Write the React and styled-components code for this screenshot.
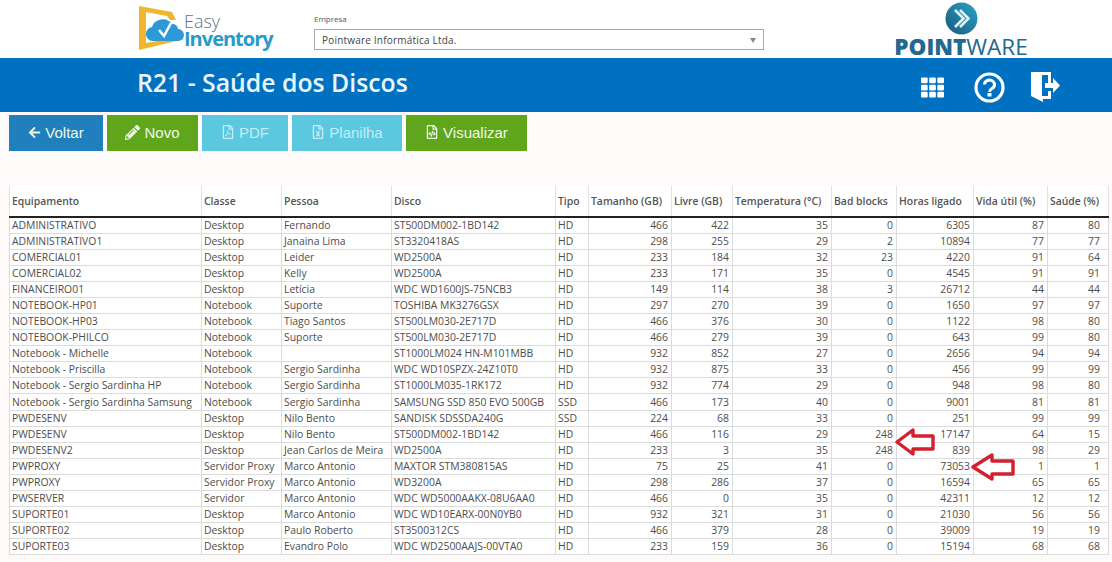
import React from "react";
import styled, { createGlobalStyle } from "styled-components";
import { FaArrowLeft, FaPencilAlt, FaRegFilePdf, FaRegFileExcel, FaRegFileCode, FaTh } from "react-icons/fa";

const GlobalStyle = createGlobalStyle`
  html, body {
    margin: 0;
    padding: 0;
    background: #fffafa;
    font-family: "Open Sans", "Noto Sans", sans-serif;
    overflow: hidden;
  }
`;

const Page = styled.div`
  position: relative;
  width: 1112px;
  height: 562px;
  overflow: hidden;
`;

const TopBar = styled.header`
  height: 58px;
  background: #fff;
  display: flex;
  padding-left: 137px;
`;

const BrandLogo = styled.div`
  width: 138px;
  height: 52px;
  display: flex;
  align-items: flex-start;
  margin-top: 3px;
`;

const BrandText = styled.div`
  display: flex;
  flex-direction: column;
  margin-left: -1px;
  margin-top: 11px;
  font-family: "Open Sans", sans-serif;
`;

const BrandEasy = styled.span`
  font-size: 18px;
  line-height: 15px;
  font-weight: 300;
  color: #66727c;
`;

const BrandName = styled.span`
  font-size: 20px;
  line-height: 19px;
  font-weight: 700;
  color: #2b9ac9;
  letter-spacing: -1px;
`;

const CompanyField = styled.div`
  width: 450px;
  margin-left: 39px;
  padding-top: 13px;
`;

const CompanyLabel = styled.div`
  font-size: 8px;
  line-height: 11px;
  color: #555;
  margin-bottom: 5px;
`;

const CompanySelect = styled.div`
  height: 19px;
  border: 1px solid #a9a9a9;
  display: flex;
  align-items: center;
  justify-content: space-between;
  padding: 0 7px;
  font-size: 10px;
  color: #444;
  letter-spacing: 0.2px;
`;

const Caret = styled.span`
  width: 0;
  height: 0;
  border-left: 3.5px solid transparent;
  border-right: 3.5px solid transparent;
  border-top: 5px solid #888;
  margin-top: 2px;
`;

const PartnerLogo = styled.div`
  margin-left: 129px;
  width: 136px;
  display: flex;
  flex-direction: column;
  align-items: center;
  padding-top: 2px;
`;

const PartnerName = styled.div`
  font-size: 22.5px;
  line-height: 21px;
  margin-top: 1px;
  color: #23688e;
  font-weight: 800;
  white-space: nowrap;
  span {
    font-weight: 400;
  }
`;

const TitleBar = styled.div`
  height: 54px;
  background: #0070c0;
  display: flex;
  align-items: center;
  padding-left: 137px;
`;

const Title = styled.h1`
  margin: 0 0 6px;
  flex: 1;
  color: #e8f6ff;
  font-family: "Open Sans", sans-serif;
  font-size: 24.8px;
  font-weight: 600;
`;

const TitleIcons = styled.div`
  display: flex;
  align-items: center;
  margin: 4px 51px 0 0;
  color: #fff;
`;

const IconSlot = styled.span`
  display: flex;
  margin-right: ${(p) => p.$gap}px;
`;

const Toolbar = styled.div`
  display: flex;
  gap: 4px;
  padding: 3px 0 0 9px;
`;

const Button = styled.div`
  width: ${(p) => p.$w}px;
  height: 36px;
  padding-bottom: 2px;
  box-sizing: border-box;
  display: flex;
  align-items: center;
  justify-content: center;
  gap: 4px;
  font-family: "Liberation Sans", Arial, sans-serif;
  font-size: 15px;
  color: ${(p) => (p.$disabled ? "#c8ecf5" : "#f1f7ea")};
  background: ${(p) => p.$bg};
`;

const TableWrap = styled.div`
  padding: 35px 0 0 9px;
`;

const Table = styled.table`
  border-collapse: collapse;
  table-layout: fixed;
  width: 1099px;
  background: #fff;
  font-size: 10.4px;
  color: #4d4d4d;
`;

const HeadCell = styled.th`
  height: 30px;
  padding: 0 2px 0 2px;
  border-left: 1px solid #e2e2e2;
  border-right: 1px solid #e2e2e2;
  border-bottom: 2px solid #222;
  font-weight: 600;
  color: #555;
  text-align: left;
  white-space: nowrap;
  overflow: hidden;
`;

const Cell = styled.td`
  height: ${(p) => (p.$tall ? 16 : 15)}px;
  padding: 0 3px 0 2px;
  border: 1px solid #dcdcdc;
  line-height: 15px;
  text-align: ${(p) => (p.$num ? "right" : "left")};
  white-space: nowrap;
  overflow: hidden;
  &:last-child {
    padding-right: 8px;
  }
`;

const Marker = styled.svg`
  position: absolute;
  left: ${(p) => p.$x}px;
  top: ${(p) => p.$y}px;
`;

const columns = [
  ["Equipamento", 192],
  ["Classe", 80],
  ["Pessoa", 110],
  ["Disco", 164],
  ["Tipo", 33],
  ["Tamanho (GB)", 83],
  ["Livre (GB)", 61],
  ["Temperatura (°C)", 99],
  ["Bad blocks", 65],
  ["Horas ligado", 77],
  ["Vida útil (%)", 74],
  ["Saúde (%)", 61],
];

const rows = [
  ["ADMINISTRATIVO", "Desktop", "Fernando", "ST500DM002-1BD142", "HD", 466, 422, 35, 0, 6305, 87, 80],
  ["ADMINISTRATIVO1", "Desktop", "Janaina Lima", "ST3320418AS", "HD", 298, 255, 29, 2, 10894, 77, 77],
  ["COMERCIAL01", "Desktop", "Leider", "WD2500A", "HD", 233, 184, 32, 23, 4220, 91, 64],
  ["COMERCIAL02", "Desktop", "Kelly", "WD2500A", "HD", 233, 171, 35, 0, 4545, 91, 91],
  ["FINANCEIRO01", "Desktop", "Letícia", "WDC WD1600JS-75NCB3", "HD", 149, 114, 38, 3, 26712, 44, 44],
  ["NOTEBOOK-HP01", "Notebook", "Suporte", "TOSHIBA MK3276GSX", "HD", 297, 270, 39, 0, 1650, 97, 97],
  ["NOTEBOOK-HP03", "Notebook", "Tiago Santos", "ST500LM030-2E717D", "HD", 466, 376, 30, 0, 1122, 98, 80],
  ["NOTEBOOK-PHILCO", "Notebook", "Suporte", "ST500LM030-2E717D", "HD", 466, 279, 39, 0, 643, 99, 80],
  ["Notebook - Michelle", "Notebook", "", "ST1000LM024 HN-M101MBB", "HD", 932, 852, 27, 0, 2656, 94, 94],
  ["Notebook - Priscilla", "Notebook", "Sergio Sardinha", "WDC WD10SPZX-24Z10T0", "HD", 932, 875, 33, 0, 456, 99, 99],
  ["Notebook - Sergio Sardinha HP", "Notebook", "Sergio Sardinha", "ST1000LM035-1RK172", "HD", 932, 774, 29, 0, 948, 98, 80],
  ["Notebook - Sergio Sardinha Samsung", "Notebook", "Sergio Sardinha", "SAMSUNG SSD 850 EVO 500GB", "SSD", 466, 173, 40, 0, 9001, 81, 81],
  ["PWDESENV", "Desktop", "Nilo Bento", "SANDISK SDSSDA240G", "SSD", 224, 68, 33, 0, 251, 99, 99],
  ["PWDESENV", "Desktop", "Nilo Bento", "ST500DM002-1BD142", "HD", 466, 116, 29, 248, 17147, 64, 15],
  ["PWDESENV2", "Desktop", "Jean Carlos de Meira", "WD2500A", "HD", 233, 3, 35, 248, 839, 98, 29],
  ["PWPROXY", "Servidor Proxy", "Marco Antonio", "MAXTOR STM380815AS", "HD", 75, 25, 41, 0, 73053, 1, 1],
  ["PWPROXY", "Servidor Proxy", "Marco Antonio", "WD3200A", "HD", 298, 286, 37, 0, 16594, 65, 65],
  ["PWSERVER", "Servidor", "Marco Antonio", "WDC WD5000AAKX-08U6AA0", "HD", 466, 0, 35, 0, 42311, 12, 12],
  ["SUPORTE01", "Desktop", "Marco Antonio", "WDC WD10EARX-00N0YB0", "HD", 932, 321, 31, 0, 21030, 56, 56],
  ["SUPORTE02", "Desktop", "Paulo Roberto", "ST3500312CS", "HD", 466, 379, 28, 0, 39009, 19, 19],
  ["SUPORTE03", "Desktop", "Evandro Polo", "WDC WD2500AAJS-00VTA0", "HD", 233, 159, 36, 0, 15194, 68, 68],
];

const CloudMark = () => (
  <svg width="48" height="50" viewBox="0 0 48 50">
    <path d="M2 3 L35 9 L39 17 L33 17 L30 13 L9 9 L9 40 L41 34 L48 36 L2 47 Z" fill="#f0b62e" />
    <path d="M16 38 a6.5 7 0 0 1 -1 -14 a11 10 0 0 1 20 -3 a6 6 0 0 1 6 5 a6 6 0 0 1 0 12 Z" fill="#2b9ad6" />
    <path d="M22 27 l5 6 l7 -13" fill="none" stroke="#fff" strokeWidth="2.6" />
  </svg>
);

const PartnerMark = () => (
  <svg width="33" height="33" viewBox="0 0 33 33">
    <defs>
      <linearGradient id="pointwareDisc" x1="0" y1="1" x2="1" y2="0">
        <stop offset="0" stopColor="#17597f" />
        <stop offset="1" stopColor="#2aa5c6" />
      </linearGradient>
    </defs>
    <circle cx="16.5" cy="16.5" r="16" fill="url(#pointwareDisc)" />
    <path d="M10 8 l8.5 8.5 l-8.5 8.5 M15 8 l8.5 8.5 l-8.5 8.5" fill="none" stroke="#dff2f8" strokeWidth="2.6" />
  </svg>
);

const HelpIcon = () => (
  <svg width="31" height="31" viewBox="0 0 31 31">
    <circle cx="15.5" cy="15.5" r="13.5" fill="none" stroke="#fff" strokeWidth="3.2" />
    <path d="M10.5 12.5 a5 4.5 0 1 1 7.5 4 q-2.5 1.5 -2.5 3.5" fill="none" stroke="#fff" strokeWidth="3" />
    <rect x="13.5" y="21" width="4" height="3.5" fill="#fff" />
  </svg>
);

const ExitIcon = () => (
  <svg width="31" height="31" viewBox="0 0 31 31">
    <path d="M1 0 H21 V11 H18 V3 H12 V24 H18 V19 H21 V27 H13 V30 L1 24 Z" fill="#fff" />
    <path d="M15 11 H23 V6 L30 13.5 L23 21 V16 H15 Z" fill="#fff" />
  </svg>
);

const Arrow = ({ x, y, neck, tail }) => (
  <Marker $x={x} $y={y} width={tail + 3} height="30" viewBox={`0 0 ${tail + 3} 30`}>
    <path
      d={`M2 15 L${neck} 3 L${neck} 9 L${tail} 9 L${tail} 22 L${neck} 22 L${neck} 27 Z`}
      fill="#fff"
      stroke="#d2202f"
      strokeWidth="3.4"
      strokeLinejoin="round"
    />
  </Marker>
);

export default function App() {
  return (
    <Page>
      <GlobalStyle />
      <TopBar>
        <BrandLogo>
          <CloudMark />
          <BrandText>
            <BrandEasy>Easy</BrandEasy>
            <BrandName>Inventory</BrandName>
          </BrandText>
        </BrandLogo>
        <CompanyField>
          <CompanyLabel>Empresa</CompanyLabel>
          <CompanySelect>
            Pointware Informática Ltda.
            <Caret />
          </CompanySelect>
        </CompanyField>
        <PartnerLogo>
          <PartnerMark />
          <PartnerName>
            POINT<span>WARE</span>
          </PartnerName>
        </PartnerLogo>
      </TopBar>
      <TitleBar>
        <Title>R21 - Saúde dos Discos</Title>
        <TitleIcons>
          <IconSlot $gap={30}><FaTh size={23} /></IconSlot>
          <IconSlot $gap={25}><HelpIcon /></IconSlot>
          <IconSlot $gap={0}><ExitIcon /></IconSlot>
        </TitleIcons>
      </TitleBar>
      <Toolbar>
        <Button $w={94} $bg="#2080bd"><FaArrowLeft size={13} /> Voltar</Button>
        <Button $w={91} $bg="#5fa61c"><FaPencilAlt size={15} /> Novo</Button>
        <Button $w={86} $bg="#5bc8e0" $disabled><FaRegFilePdf size={14} /> PDF</Button>
        <Button $w={110} $bg="#5bc8e0" $disabled><FaRegFileExcel size={14} /> Planilha</Button>
        <Button $w={121} $bg="#5fa61c"><FaRegFileCode size={14} /> Visualizar</Button>
      </Toolbar>
      <TableWrap>
        <Table>
          <colgroup>
            {columns.map(([name, width]) => (
              <col key={name} style={{ width }} />
            ))}
          </colgroup>
          <thead>
            <tr>
              {columns.map(([name]) => (
                <HeadCell key={name}>{name}</HeadCell>
              ))}
            </tr>
          </thead>
          <tbody>
            {rows.map((row, i) => (
              <tr key={i}>
                {row.map((value, j) => (
                  <Cell key={j} $num={j > 4} $tall={i === 11}>{value}</Cell>
                ))}
              </tr>
            ))}
          </tbody>
        </Table>
      </TableWrap>
      <Arrow x={895} y={427} neck={18} tail={38} />
      <Arrow x={971} y={452} neck={21} tail={42} />
    </Page>
  );
}
